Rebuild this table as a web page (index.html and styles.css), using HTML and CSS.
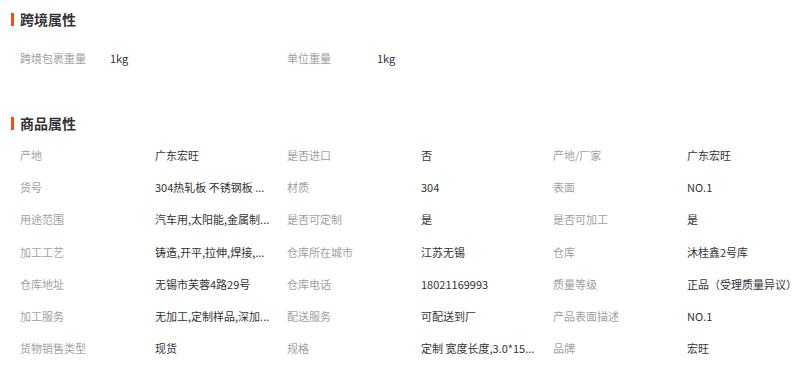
FILE: index.html
```html
<!DOCTYPE html>
<html lang="zh-CN">
<head>
<meta charset="utf-8">
<title>属性</title>
<link rel="stylesheet" href="styles.css">
</head>
<body>
<section class="sec sec-cross">
  <h2 class="sec-title"><span class="bar"></span><span>跨境属性</span></h2>
  <div class="grid grid-cross">
    <div class="lbl">跨境包裹重量</div><div class="val">1kg</div>
    <div class="lbl">单位重量</div><div class="val">1kg</div>
  </div>
</section>
<section class="sec sec-prod">
  <h2 class="sec-title"><span class="bar"></span><span>商品属性</span></h2>
  <div class="grid grid-prod">
    <div class="lbl">产地</div><div class="val">广东宏旺</div>
    <div class="lbl">是否进口</div><div class="val">否</div>
    <div class="lbl">产地/厂家</div><div class="val">广东宏旺</div>

    <div class="lbl">货号</div><div class="val">304热轧板 不锈钢板 ...</div>
    <div class="lbl">材质</div><div class="val">304</div>
    <div class="lbl">表面</div><div class="val">NO.1</div>

    <div class="lbl">用途范围</div><div class="val">汽车用,太阳能,金属制...</div>
    <div class="lbl">是否可定制</div><div class="val">是</div>
    <div class="lbl">是否可加工</div><div class="val">是</div>

    <div class="lbl">加工工艺</div><div class="val">铸造,开平,拉伸,焊接,...</div>
    <div class="lbl">仓库所在城市</div><div class="val">江苏无锡</div>
    <div class="lbl">仓库</div><div class="val">沐桂鑫2号库</div>

    <div class="lbl">仓库地址</div><div class="val">无锡市芙蓉4路29号</div>
    <div class="lbl">仓库电话</div><div class="val">18021169993</div>
    <div class="lbl">质量等级</div><div class="val">正品（受理质量异议）</div>

    <div class="lbl">加工服务</div><div class="val">无加工,定制样品,深加...</div>
    <div class="lbl">配送服务</div><div class="val">可配送到厂</div>
    <div class="lbl">产品表面描述</div><div class="val">NO.1</div>

    <div class="lbl">货物销售类型</div><div class="val">现货</div>
    <div class="lbl">规格</div><div class="val">定制 宽度长度,3.0*15...</div>
    <div class="lbl">品牌</div><div class="val">宏旺</div>
  </div>
</section>
</body>
</html>
```

FILE: styles.css
```css
html, body {
  margin: 0;
  padding: 0;
  background: #ffffff;
}
body {
  font-family: "Noto Sans CJK SC", "Liberation Sans", sans-serif;
  font-size: 11px;
  color: #333333;
  overflow: hidden;
}
.sec-title {
  display: flex;
  align-items: center;
  gap: 6px;
  margin: 0;
  padding-left: 11px;
  height: 14px;
  font-size: 14px;
  line-height: 14px;
  font-weight: bold;
  color: #333333;
}
.bar {
  display: block;
  width: 3px;
  height: 13px;
  background: #ff4a0a;
}
.sec-cross .sec-title {
  margin-top: 12px;
  margin-bottom: 16px;
}
.sec-prod .sec-title {
  margin-top: 42px;
  margin-bottom: 9px;
}
.grid {
  display: grid;
  padding-left: 20px;
  grid-auto-rows: 32px;
  align-items: center;
}
.grid-cross {
  grid-template-columns: 90px 177px 90px 1fr;
}
.grid-prod {
  grid-template-columns: 135px 132px 134px 132px 134px 1fr;
  grid-auto-rows: 32.2px;
}
.lbl {
  color: #a0a0a0;
  white-space: nowrap;
  line-height: 16px;
}
.val {
  color: #333333;
  white-space: nowrap;
  line-height: 16px;
}
```
